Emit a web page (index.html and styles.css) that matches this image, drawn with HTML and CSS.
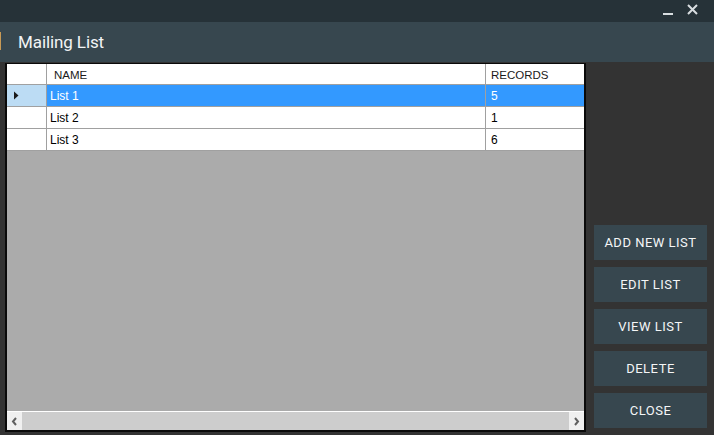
FILE: index.html
```html
<!DOCTYPE html>
<html>
<head>
<meta charset="utf-8">
<link rel="stylesheet" href="styles.css">
</head>
<body>
<div class="window">
  <div class="titlebar">
    <span class="ctl min"></span>
    <span class="ctl close">
      <svg width="11" height="11" viewBox="0 0 11 11"><path d="M1 1L10 10M10 1L1 10" stroke="#d8dde0" stroke-width="2"/></svg>
    </span>
  </div>
  <div class="header">
    <span class="accent"></span>
    <h1>Mailing List</h1>
  </div>
  <div class="main">
    <div class="grid">
      <div class="table">
        <div class="row head">
          <div class="rh"></div>
          <div class="c name">NAME</div>
          <div class="c rec">RECORDS</div>
        </div>
        <div class="row sel">
          <div class="rh"><svg width="6" height="9" viewBox="0 0 6 9"><path d="M1 0.5L5.5 4.5L1 8.5Z" fill="#1a1a1a"/></svg></div>
          <div class="c name">List 1</div>
          <div class="c rec">5</div>
        </div>
        <div class="row">
          <div class="rh"></div>
          <div class="c name">List 2</div>
          <div class="c rec">1</div>
        </div>
        <div class="row">
          <div class="rh"></div>
          <div class="c name">List 3</div>
          <div class="c rec">6</div>
        </div>
      </div>
      <div class="empty"></div>
      <div class="hscroll">
        <div class="arrow"><svg width="7" height="9" viewBox="0 0 7 9"><path d="M5 1L2 4.5L5 8" stroke="#606060" stroke-width="2" fill="none"/></svg></div>
        <div class="track"></div>
        <div class="arrow"><svg width="7" height="9" viewBox="0 0 7 9"><path d="M2 1L5 4.5L2 8" stroke="#606060" stroke-width="2" fill="none"/></svg></div>
      </div>
    </div>
    <div class="buttons">
      <button class="btn">ADD NEW LIST</button>
      <button class="btn">EDIT LIST</button>
      <button class="btn">VIEW LIST</button>
      <button class="btn">DELETE</button>
      <button class="btn">CLOSE</button>
    </div>
  </div>
</div>
</body>
</html>
```
FILE: styles.css
```css
* { box-sizing: border-box; }
html, body { margin: 0; padding: 0; }
body {
  width: 714px;
  height: 435px;
  background: #333333;
  overflow: hidden;
  font-family: "Liberation Sans", Arial, sans-serif;
}
.window { width: 714px; height: 435px; display: flex; flex-direction: column; }
.titlebar {
  height: 22px;
  background: #263238;
  display: flex;
  justify-content: flex-end;
  align-items: center;
  padding-right: 16px;
  gap: 14px;
}
.ctl { display: flex; align-items: center; justify-content: center; }
.ctl.min { width: 10px; height: 2px; background: #d8dde0; margin-top: 5px; }
.ctl.close { width: 11px; height: 11px; margin-top: -3px; }
.header {
  height: 40px;
  background: #37474f;
  display: flex;
  align-items: center;
  position: relative;
}
.accent {
  position: absolute;
  left: 0;
  top: 10px;
  width: 1px;
  height: 18px;
  background: #c89a55;
}
.header h1 {
  margin: 0 0 0 18px;
  font-family: Roboto, "Liberation Sans", sans-serif;
  font-weight: 400;
  font-size: 17px;
  color: #f2f4f5;
  letter-spacing: -0.1px;
}
.main {
  flex: 1;
  display: flex;
  padding: 1px 0 0 5px;
}
.grid {
  width: 581px;
  height: 369px;
  border: 2px solid #0a0a0a;
  background: #ababab;
  display: flex;
  flex-direction: column;
}
.table { background: #fff; }
.row { display: flex; height: 22px; border-bottom: 1px solid #a0a0a0; background: #fff; }
.row.head { height: 21px; margin-top: -1px; }
.rh {
  width: 40px;
  border-right: 1px solid #a0a0a0;
  display: flex;
  align-items: center;
  padding-left: 6px;
  background: #fff;
}
.row.sel .rh { background: #bcdcf4; }
.c {
  display: flex;
  align-items: center;
  font-size: 12px;
  color: #000;
  padding-left: 3px;
}
.c.name { width: 439px; border-right: 1px solid #a0a0a0; }
.c.rec { flex: 1; padding-left: 5px; }
.row.head .c { padding-top: 1px; font-size: 11.5px; }
.row.head .c.name { padding-left: 7px; }
.row.head .c { color: #1a1a1a; }
.row.sel .c { background: #3399ff; color: #fff; }
.empty { flex: 1; }
.hscroll {
  height: 19px;
  border-top: 1px solid #ffffff;
  display: flex;
  background: #f0f0f0;
}
.arrow { width: 15px; display: flex; align-items: center; justify-content: center; background: #f0f0f0; }
.track { flex: 1; background: #cdcdcd; }
.buttons {
  margin-left: 8px;
  width: 113px;
  display: flex;
  flex-direction: column;
  justify-content: flex-end;
  gap: 7px;
  padding-bottom: 7px;
}
.btn {
  height: 35px;
  width: 113px;
  border: none;
  background: #37474f;
  color: #f4f6f7;
  font-family: Roboto, "Liberation Sans", sans-serif;
  font-weight: 400;
  font-size: 13px;
  letter-spacing: 0.5px;
  padding: 0;
}
```
